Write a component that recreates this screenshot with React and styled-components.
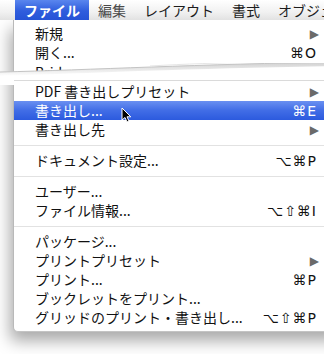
import React from "react";
import styled, { createGlobalStyle } from "styled-components";

const GlobalStyle = createGlobalStyle`
  html, body {
    margin: 0;
    padding: 0;
    background: #fff;
  }
`;

const JP = `"Noto Sans CJK JP", "Liberation Sans", sans-serif`;
const SYM = `"DejaVu Sans", "Noto Sans CJK JP", sans-serif`;

const barItems = ["ファイル", "編集", "レイアウト", "書式", "オブジェクト"];

const menu = [
  { label: "新規", sub: true },
  { label: "開く...", key: "⌘O" },
  { tear: true, label: "Bridge..." },
  { label: "PDF 書き出しプリセット", sub: true },
  { label: "書き出し...", key: "⌘E", active: true },
  { label: "書き出し先", sub: true },
  { sep: true },
  { label: "ドキュメント設定...", key: "⌥⌘P" },
  { sep: true },
  { label: "ユーザー..." },
  { label: "ファイル情報...", key: "⌥⇧⌘I" },
  { sep: true },
  { label: "パッケージ..." },
  { label: "プリントプリセット", sub: true },
  { label: "プリント...", key: "⌘P" },
  { label: "ブックレットをプリント..." },
  { label: "グリッドのプリント・書き出し...", key: "⌥⇧⌘P" },
];

function App() {
  return (
    <>
      <GlobalStyle />
      <Page>
        <MenuBar>
          {barItems.map((item, i) => (
            <BarItem key={item} $open={i === 0} $dim={i === 1}>
              {item}
            </BarItem>
          ))}
        </MenuBar>
        <MenuArea>
          <Panel>
            {menu.map((item, i) => {
              if (item.sep) return <Separator key={i} />;
              if (item.tear)
                return (
                  <TearRow key={i}>
                    <Label>{item.label}</Label>
                    <Tear width="340" height="22" viewBox="0 0 340 22">
                      <defs>
                        <linearGradient id="curl" x1="0" y1="0" x2="0" y2="1">
                          <stop offset="0" stopColor="#cfcfcf" />
                          <stop offset="1" stopColor="#ffffff" />
                        </linearGradient>
                      </defs>
                      <path
                        d="M0,9 C90,7 200,1 340,-1 L340,22 L0,22 Z"
                        fill="#fff"
                      />
                      <path
                        d="M0,9 C90,7 200,1 340,-1 L340,3 C200,5 90,10 0,13 Z"
                        fill="url(#curl)"
                      />
                      <path
                        d="M0,9 C90,7 200,1 340,-1"
                        fill="none"
                        stroke="#c4c4c4"
                        strokeWidth="1"
                      />
                      <path
                        d="M150,3 C220,-1 290,-2 340,0"
                        fill="none"
                        stroke="#e6e6e6"
                        strokeWidth="1"
                      />
                      <line x1="14" y1="17.5" x2="340" y2="17.5" stroke="#dadada" />
                    </Tear>
                  </TearRow>
                );
              return (
                <Row key={i} $active={item.active}>
                  <Label>{item.label}</Label>
                  {item.key && <Shortcut>{item.key}</Shortcut>}
                  {item.sub && <Arrow $active={item.active}>▶</Arrow>}
                  {item.active && (
                    <Cursor width="11" height="17" viewBox="0 0 11 17">
                      <path
                        d="M1,1 L1,13 L4,10.5 L6,15 L8,14 L6,9.8 L9.8,9.8 Z"
                        fill="#000"
                        stroke="#fff"
                        strokeWidth="1"
                        strokeLinejoin="round"
                      />
                    </Cursor>
                  )}
                </Row>
              );
            })}
          </Panel>
        </MenuArea>
      </Page>
    </>
  );
}

export default App;

const Page = styled.div`
  position: relative;
  width: 324px;
  height: 354px;
  overflow: hidden;
  background: #fff;
`;

const MenuBar = styled.div`
  display: flex;
  height: 20px;
  padding-left: 15px;
  background: linear-gradient(#ffffff, #f1f1f1 60%, #e2e2e2);
  position: relative;
  z-index: 2;
`;

const BarItem = styled.div`
  padding: 0 9px;
  font-family: ${JP};
  font-size: 14px;
  line-height: 20px;
  white-space: nowrap;
  color: ${(p) => (p.$open ? "#fff" : p.$dim ? "#4a4a4a" : "#1c1c1c")};
  font-weight: ${(p) => (p.$open ? 700 : 400)};
  background: ${(p) =>
    p.$open ? "linear-gradient(#5a86ee, #2f5ddd 55%, #2553d6)" : "none"};
`;

const MenuArea = styled.div`
  padding-left: 13px;
`;

const Panel = styled.div`
  width: 330px;
  padding: 4px 0;
  background: #fff;
  border-left: 1px solid #b9b9b9;
  border-bottom: 1px solid #c4c4c4;
  border-bottom-left-radius: 5px;
  box-shadow: -3px 9px 16px rgba(0, 0, 0, 0.34);
`;

const Row = styled.div`
  position: relative;
  display: flex;
  align-items: center;
  height: 19px;
  padding: 0 28px 0 21px;
  font-family: ${JP};
  font-size: 14px;
  color: ${(p) => (p.$active ? "#fff" : "#111")};
  background: ${(p) =>
    p.$active ? "linear-gradient(#6a90f1, #416de6 50%, #2c5ade)" : "none"};
`;

const Label = styled.span`
  flex: 1;
  white-space: nowrap;
  line-height: 19px;
`;

const Shortcut = styled.span`
  font-family: ${SYM};
  font-size: 14px;
  letter-spacing: 1px;
  margin-right: -1px;
  white-space: nowrap;
`;

const Arrow = styled.span`
  font-family: ${SYM};
  font-size: 12px;
  margin-right: -3px;
  color: ${(p) => (p.$active ? "#fff" : "#6a6a6a")};
`;

const Separator = styled.div`
  height: 12px;
  display: flex;
  align-items: center;

  &::after {
    content: "";
    flex: 1;
    height: 1px;
    background: #e2e2e2;
  }
`;

const TearRow = styled.div`
  position: relative;
  height: 20px;
  padding-left: 21px;
  font-family: ${JP};
  font-size: 14px;
  color: #111;
`;

const Tear = styled.svg`
  position: absolute;
  left: -14px;
  top: 1px;
`;

const Cursor = styled.svg`
  position: absolute;
  left: 107px;
  top: 6px;
`;
